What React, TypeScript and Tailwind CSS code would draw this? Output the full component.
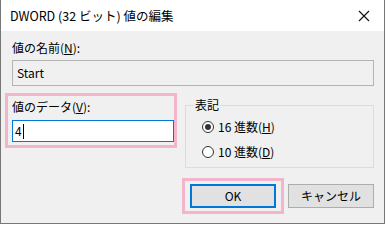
import React from "react";

const font = { fontFamily: '"Noto Sans CJK JP", "Noto Sans", sans-serif' };

function Radio({ checked }: { checked?: boolean }) {
  return (
    <span className="w-[12px] h-[12px] rounded-full border border-[#333333] bg-white flex items-center justify-center">
      {checked && <span className="w-[6px] h-[6px] rounded-full bg-[#333333]" />}
    </span>
  );
}

export default function App() {
  return (
    <div className="w-[385px] h-[225px] bg-white">
      <div
        className="w-[385px] h-[224px] bg-[#f0f0f0] border-x border-b border-[#777777] flex flex-col text-[12px] text-black leading-[16px]"
        style={font}
      >
        {/* title bar */}
        <div className="h-[31px] bg-white flex items-center justify-between pl-[9px] pr-[12px] shrink-0">
          <span className="text-[12.5px]">DWORD (32 ビット) 値の編集</span>
          <svg width="12" height="12" viewBox="0 0 12 12" className="mr-[2px]">
            <path d="M1 1L11 11M11 1L1 11" stroke="#111" strokeWidth="1.1" />
          </svg>
        </div>
        {/* body */}
        <div className="flex flex-col pl-[11px] pr-[10px] pt-[9px]">
          <div>
            値の名前(<span className="underline">N</span>):
          </div>
          <div className="mt-[4px] h-[26px] w-[362px] border border-[#b4b4b4] bg-[#f0f0f0] flex items-center pl-[4px]">
            Start
          </div>
        </div>
        <div className="flex pl-[4px] pt-[7px]">
          <div className="w-[172px] h-[55px] border-[3px] border-[#f3b5ca] flex flex-col pl-[4px] pt-[3px]">
            <div>
              値のデータ(<span className="underline">V</span>):
            </div>
            <div className="mt-[5px] w-[162px] h-[22px] border border-[#0078d7] bg-white flex items-center pl-[2px]">
              <span>4</span>
              <span className="w-[1px] h-[15px] bg-black ml-[1px]" />
            </div>
          </div>
          <div className="ml-[8px] mt-[12px] w-[189px] h-[63px] border border-[#dcdcdc] relative flex flex-col pl-[16px] pt-[11px]">
            <span className="absolute left-[8px] top-[-9px] bg-[#f0f0f0] px-[1px]">表記</span>
            <div className="flex items-center gap-[4px] h-[20px]">
              <Radio checked />
              <span>
                16 進数(<span className="underline">H</span>)
              </span>
            </div>
            <div className="flex items-center gap-[4px] h-[20px] mt-[5px]">
              <Radio />
              <span>
                10 進数(<span className="underline">D</span>)
              </span>
            </div>
          </div>
        </div>
        <div className="flex pl-[181px] pt-[10px]">
          <div className="w-[102px] h-[36px] border-[3px] border-[#f3b5ca] flex items-center justify-center">
            <div className="w-[86px] h-[24px] border-2 border-[#0078d7] bg-[#e1e1e1] flex items-center justify-center">
              OK
            </div>
          </div>
          <div className="ml-[4px] mt-[6px] w-[86px] h-[24px] border border-[#adadad] bg-[#e1e1e1] flex items-center justify-center">
            キャンセル
          </div>
        </div>
      </div>
    </div>
  );
}
